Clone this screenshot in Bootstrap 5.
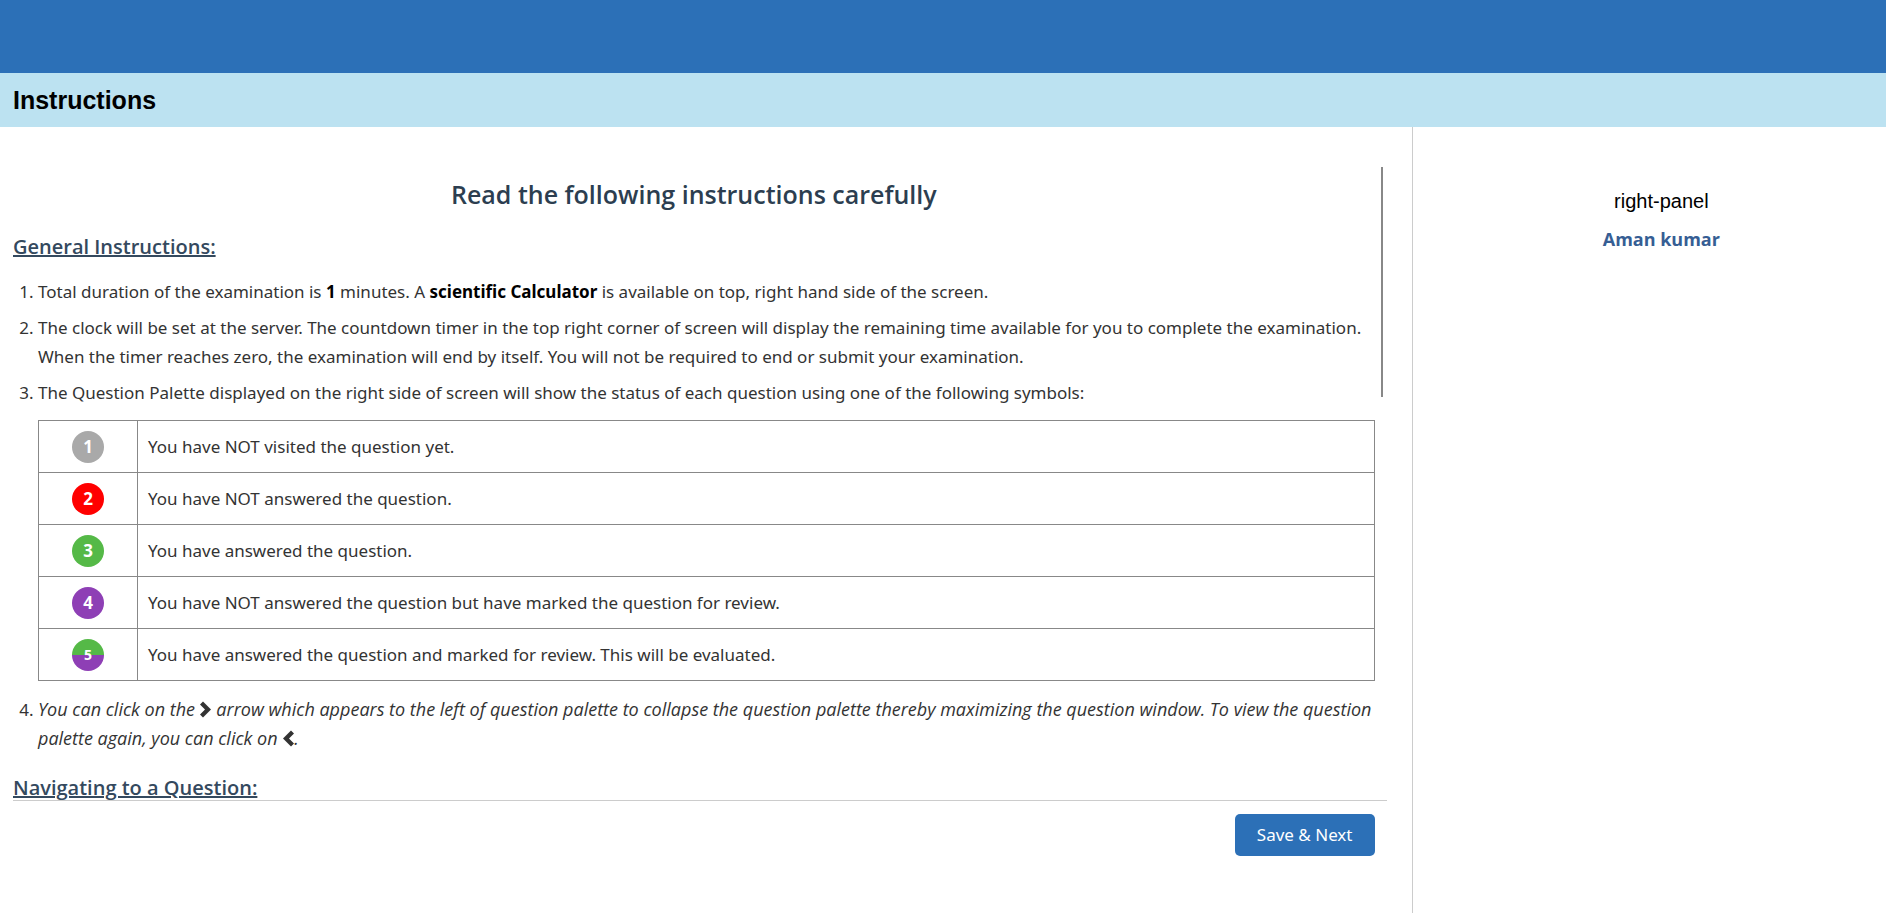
<!DOCTYPE html>
<html lang="en">
<head>
<meta charset="utf-8">
<meta name="viewport" content="width=device-width, initial-scale=1">
<title>Instructions</title>
<link href="https://cdn.jsdelivr.net/npm/bootstrap@5.3.0/dist/css/bootstrap.min.css" rel="stylesheet">
<style>
  body { font-family: "Liberation Sans", Arial, sans-serif; color: #000; padding-bottom: 4px; }
  .top-strip { height: 73px; background: #2c70b7; }
  .title-band { height: 54px; background: #bce2f1; padding: 0 13px; }
  .title-band h1 { font-size: 25px; line-height: 30px; font-weight: 700; }
  .left-pane { padding: 40px 25px 57px 13px; font-family: "Noto Sans", "Open Sans", sans-serif; }
  .right-pane { width: 25.15%; border-left: 1px solid #ccc; padding: 60px 0 0 24px; }
  .right-pane p { font-size: 20px; line-height: 28px; margin-bottom: 10px; }
  .right-pane .candidate { font-family: "Open Sans", "Noto Sans", sans-serif; font-size: 18px; font-weight: 700; color: #365e94; }
  .scroll-area { min-height: 0; padding-right: 12px; border-bottom: 1px solid #ccc; font-size: 17px; line-height: 29px; color: #333; }
  .scroll-thumb { right: 4px; top: 0; width: 2px; height: 230px; background: #888; }
  .scroll-area h2, .scroll-area h3 { font-family: "Open Sans", "Noto Sans", sans-serif; font-weight: 600; line-height: 32px; }
  .scroll-area h2 { font-size: 25px; color: #2c3e50; margin: 11px 0 21px; }
  .scroll-area h3 { font-size: 20px; color: #34495e; text-decoration: underline; margin: 19px 0 14px; }
  .scroll-area ol { padding-left: 25px; margin: 0; }
  .scroll-area li { margin-bottom: 7px; }
  .scroll-area li b { color: #000; }
  .scroll-area li i { font-family: "Open Sans", "Noto Sans", sans-serif; font-size: 18px; }
  .legend { width: 100%; margin: 13px 0 14px; }
  .legend td { border: 1px solid #888; height: 52px; padding: 0 10px; }
  .legend td:first-child { width: 99px; }
  .legend-dot { width: 32px; height: 32px; color: #fff; font-weight: 700; }
  .dot-new { background: #a9a9a9; }
  .dot-missed { background: #f00; }
  .dot-done { background: #55b947; }
  .dot-marked { background: #8e3fb5; }
  .dot-both { background: linear-gradient(#55b947 50%, #8e3fb5 50%); font-size: 14px; }
  .chevron { width: 12px; height: 17px; vertical-align: -2px; }
  .save-btn { width: 140px; height: 42px; margin: 13px 12px 0 0; font-size: 17px; line-height: 24px; background: #2c70b7; color: #fff; border: 0; border-radius: 5px; padding: 0; }
  .save-btn:hover { background: #245f9d; color: #fff; }
</style>
</head>
<body class="vh-100 d-flex flex-column bg-white">
  <div class="top-strip flex-shrink-0"></div>
  <header class="title-band d-flex align-items-center flex-shrink-0"><h1 class="m-0">Instructions</h1></header>
  <div class="d-flex flex-grow-1 overflow-hidden">
    <main class="left-pane d-flex flex-column flex-fill overflow-hidden">
      <section class="scroll-area position-relative overflow-hidden flex-fill">
        <div class="scroll-thumb position-absolute"></div>
        <h2 class="text-center">Read the following instructions carefully</h2>
        <h3>General Instructions:</h3>
        <ol>
          <li>Total duration of the examination is <b>1</b> minutes. A <b>scientific Calculator</b> is available on top, right hand side of the screen.</li>
          <li>The clock will be set at the server. The countdown timer in the top right corner of screen will display the remaining time available for you to complete the examination. When the timer reaches zero, the examination will end by itself. You will not be required to end or submit your examination.</li>
          <li>The Question Palette displayed on the right side of screen will show the status of each question using one of the following symbols:
            <table class="legend">
              <tbody>
                <tr><td><span class="legend-dot dot-new rounded-circle d-flex align-items-center justify-content-center mx-auto">1</span></td><td>You have NOT visited the question yet.</td></tr>
                <tr><td><span class="legend-dot dot-missed rounded-circle d-flex align-items-center justify-content-center mx-auto">2</span></td><td>You have NOT answered the question.</td></tr>
                <tr><td><span class="legend-dot dot-done rounded-circle d-flex align-items-center justify-content-center mx-auto">3</span></td><td>You have answered the question.</td></tr>
                <tr><td><span class="legend-dot dot-marked rounded-circle d-flex align-items-center justify-content-center mx-auto">4</span></td><td>You have NOT answered the question but have marked the question for review.</td></tr>
                <tr><td><span class="legend-dot dot-both rounded-circle d-flex align-items-center justify-content-center mx-auto">5</span></td><td>You have answered the question and marked for review. This will be evaluated.</td></tr>
              </tbody>
            </table>
          </li>
          <li><i>You can click on the <svg class="chevron" viewBox="0 0 12 17" aria-hidden="true"><path d="M0 3.500 3 .5 11 8.500 3 16.500 0 13.500 5 8.500Z" fill="#333"/></svg> arrow which appears to the left of question palette to collapse the question palette thereby maximizing the question window. To view the question palette again, you can click on <svg class="chevron" viewBox="0 0 12 17" aria-hidden="true"><path d="M12 3.500 9 .5 1 8.500 9 16.500 12 13.500 7 8.500Z" fill="#333"/></svg>.</i></li>
        </ol>
        <h3>Navigating to a Question:</h3>
      </section>
      <div class="d-flex justify-content-end flex-shrink-0"><button type="button" class="btn save-btn">Save &amp; Next</button></div>
    </main>
    <aside class="right-pane flex-shrink-0 text-center">
      <p>right-panel</p>
      <p class="candidate">Aman kumar</p>
    </aside>
  </div>
<script src="https://cdn.jsdelivr.net/npm/bootstrap@5.3.0/dist/js/bootstrap.bundle.min.js"></script>
</body>
</html>
